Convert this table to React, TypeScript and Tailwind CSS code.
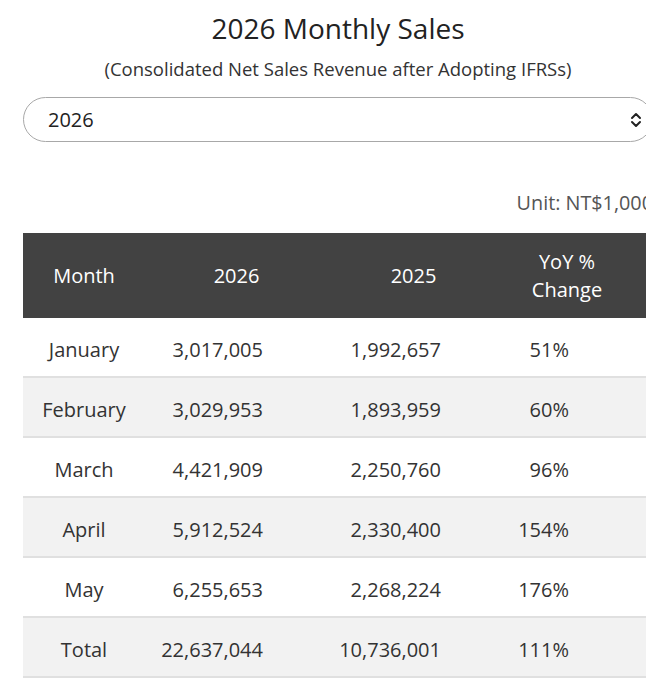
const rows = [
  { month: "January", cur: "3,017,005", prev: "1,992,657", yoy: "51%" },
  { month: "February", cur: "3,029,953", prev: "1,893,959", yoy: "60%" },
  { month: "March", cur: "4,421,909", prev: "2,250,760", yoy: "96%" },
  { month: "April", cur: "5,912,524", prev: "2,330,400", yoy: "154%" },
  { month: "May", cur: "6,255,653", prev: "2,268,224", yoy: "176%" },
  { month: "Total", cur: "22,637,044", prev: "10,736,001", yoy: "111%" },
];

const cols = "grid grid-cols-[122px_183px_171px_136px_1fr]";

export default function App() {
  return (
    <div className="w-full overflow-hidden bg-white text-[#333] font-['Open_Sans',sans-serif]">
      <div className="w-[630px] ml-[23px]">
        <h1 className="mt-[9px] text-center text-[28px] leading-[38px] text-[#222]">
          2026 Monthly Sales
        </h1>
        <p className="mt-[9px] text-center text-[18.5px] leading-[26px] text-[#333]">
          (Consolidated Net Sales Revenue after Adopting IFRSs)
        </p>

        <div className="mt-[15px] h-[45px] flex items-center justify-between rounded-full border-[1.5px] border-[#a8a8a8] pl-[24px] pr-[10px]">
          <span className="text-[20px] text-[#222]">2026</span>
          <svg width="12" height="18" viewBox="0 0 12 18" fill="none" stroke="#222" strokeWidth="2" strokeLinecap="round" strokeLinejoin="round">
            <path d="M2 7 L6 3 L10 7" />
            <path d="M2 11 L6 15 L10 11" />
          </svg>
        </div>

        <p className="mt-[48px] text-right text-[19.8px] leading-[26px] text-[#555]">
          Unit: NT$1,000
        </p>

        <div className="mt-[17px] text-[20px]">
          <div className={`${cols} h-[85px] items-center bg-[#424242] text-white text-center leading-[28px]`}>
            <div>Month</div>
            <div>2026</div>
            <div>2025</div>
            <div>
              YoY %
              <br />
              Change
            </div>
            <div />
          </div>
          {rows.map((r, i) => (
            <div
              key={r.month}
              className={`${cols} h-[60px] pt-[5px] items-center border-b-2 border-[#e0e0e0] ${
                i % 2 === 1 ? "bg-[#f2f2f2]" : "bg-white"
              }`}
            >
              <div className="text-center">{r.month}</div>
              <div className="text-right pr-[65px]">{r.cur}</div>
              <div className="text-right pr-[58px]">{r.prev}</div>
              <div className="text-right pr-[66px]">{r.yoy}</div>
              <div />
            </div>
          ))}
        </div>
      </div>
    </div>
  );
}
